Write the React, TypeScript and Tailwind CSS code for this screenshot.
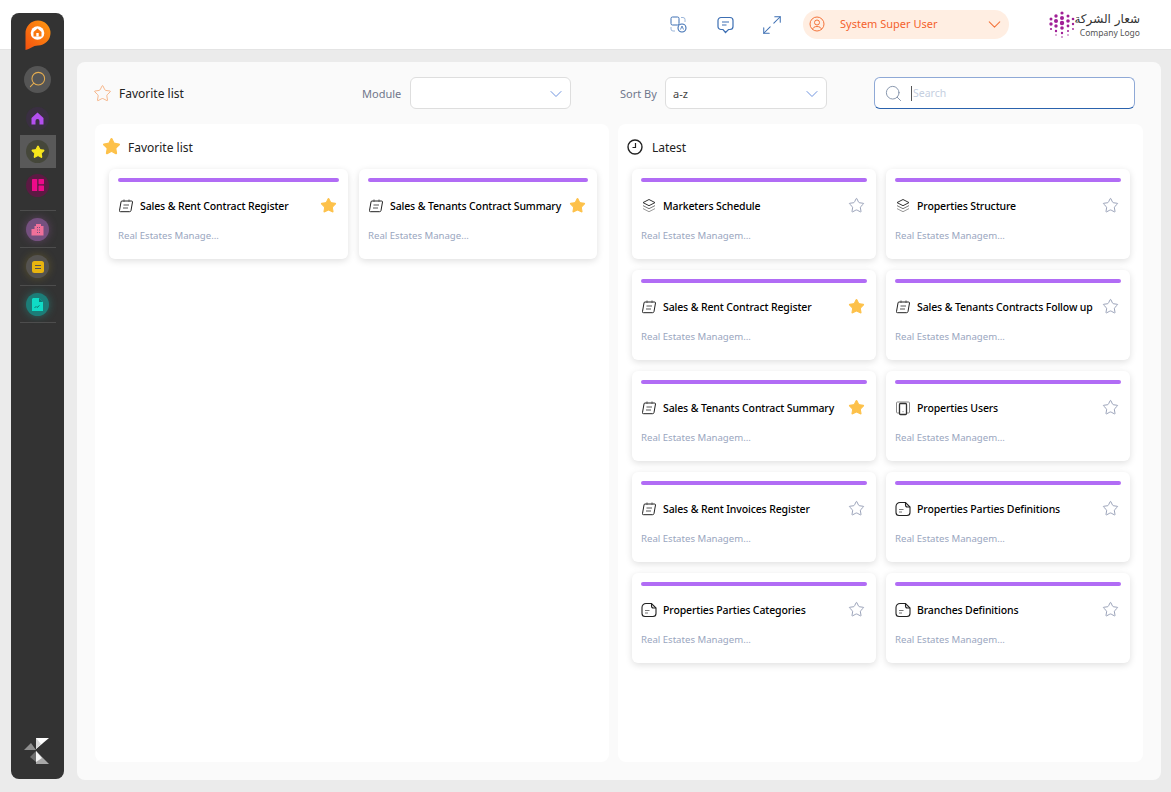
import { ChevronDown, Maximize2, Search, Star } from 'lucide-react';

const font = { fontFamily: '"Noto Sans", "Noto Sans CJK SC", sans-serif' };

type IconKind = 'note' | 'layers' | 'phone' | 'doc';

function CardIcon({ kind }: { kind: IconKind }) {
  if (kind === 'layers') {
    return (
      <svg width="16" height="16" viewBox="0 0 16 16" fill="none" stroke="#333" strokeWidth="1">
        <path d="M8 1.500 14 4.600 8 7.700 2 4.600Z" />
        <path d="M2 7.600 8 10.700 14 7.600" stroke="#777" />
        <path d="M2 10.600 8 13.700 14 10.600" stroke="#999" />
      </svg>
    );
  }
  if (kind === 'phone') {
    return (
      <svg width="16" height="16" viewBox="0 0 16 16" fill="none" stroke="#333" strokeWidth="1">
        <path d="M4 13H2.500a1 1 0 0 1-1-1V3a1 1 0 0 1 1-1h11a1 1 0 0 1 1 1v9a1 1 0 0 1-1 1H12" stroke="#888" />
        <rect x="4.500" y="3.500" width="7" height="11" rx="1" strokeWidth="1.300" />
        <path d="M8 11.500v.6" />
      </svg>
    );
  }
  if (kind === 'doc') {
    return (
      <svg width="16" height="16" viewBox="0 0 16 16" fill="none" stroke="#222" strokeWidth="1.100">
        <path d="M5 1.500h5.500L15 6v5.500a3 3 0 0 1-3 3H4a3 3 0 0 1-3-3V5.500a4 4 0 0 1 4-4Z" />
        <path d="M10.500 1.500v2.500A2 2 0 0 0 12.500 6H15" />
        <path d="M4 8.500h4.500M4 11h3" stroke="#777" />
      </svg>
    );
  }
  return (
    <svg width="16" height="16" viewBox="0 0 16 16" fill="none" stroke="#222" strokeWidth="1">
      <path d="M4 3h9.500a1 1 0 0 1 1 1l-1.500 8.500a1.500 1.500 0 0 1-1.500 1.200H2.500a1 1 0 0 1-1-1.200L3 4a1 1 0 0 1 1-1Z" />
      <path d="M6 1.500V4M11 1.500V4M5.500 7h5.500M5 10h5" stroke="#555" />
    </svg>
  );
}

function FavStar({ on }: { on: boolean }) {
  return on ? (
    <Star size={17} fill="#fdc14a" stroke="#fdc14a" strokeWidth={1.500} className="mr-[2.500px] -mt-[2px]" />
  ) : (
    <Star size={17} fill="none" stroke="#8a94ad" strokeWidth={1.200} className="mr-[2.500px] -mt-[2px]" />
  );
}

function ItemCard({ title, icon, on, sub }: { title: string; icon: IconKind; on: boolean; sub: string }) {
  return (
    <div className="h-[90px] rounded-md bg-white px-[9px] pt-[9px] shadow-[0_2px_7px_rgba(0,0,0,0.13)]">
      <div className="h-[4px] rounded-full bg-[#b16cf5]" />
      <div className="mt-[15px] flex h-[18px] items-center">
        <CardIcon kind={icon} />
        <span className="ml-[6px] mt-[2px] flex-1 whitespace-nowrap text-[10.500px] font-medium tracking-[-0.130px] text-black">{title}</span>
        <FavStar on={on} />
      </div>
      <div className="mt-[14px] text-[9.600px] leading-[14px] text-[#9aa6c0]">{sub}</div>
    </div>
  );
}

const latest: { title: string; icon: IconKind; on: boolean }[] = [
  { title: 'Marketers Schedule', icon: 'layers', on: false },
  { title: 'Properties Structure', icon: 'layers', on: false },
  { title: 'Sales & Rent Contract Register', icon: 'note', on: true },
  { title: 'Sales & Tenants Contracts Follow up', icon: 'note', on: false },
  { title: 'Sales & Tenants Contract Summary', icon: 'note', on: true },
  { title: 'Properties Users', icon: 'phone', on: false },
  { title: 'Sales & Rent Invoices Register', icon: 'note', on: false },
  { title: 'Properties Parties Definitions', icon: 'doc', on: false },
  { title: 'Properties Parties Categories', icon: 'doc', on: false },
  { title: 'Branches Definitions', icon: 'doc', on: false },
];

function SideIcon({ bg, children, glow }: { bg: string; children: React.ReactNode; glow?: string }) {
  return (
    <div className={`flex h-[23px] w-[23px] items-center justify-center rounded-full ${bg} ${glow ?? ''}`}>{children}</div>
  );
}

function Sidebar() {
  return (
    <aside className="absolute left-[11px] top-[13px] flex h-[766px] w-[53px] flex-col items-center rounded-lg bg-[#333333]">
      <svg className="mt-[7px]" width="26" height="30" viewBox="0 0 26 30">
        <defs>
          <linearGradient id="logoFill" x1="0" y1="1" x2="1" y2="0">
            <stop offset="0" stopColor="#f4500f" />
            <stop offset="1" stopColor="#ff9a10" />
          </linearGradient>
        </defs>
        <path d="M0.500 30V13a12.500 12.500 0 1 1 12.500 12.500C8 25.500 5 29 0.500 30Z" fill="url(#logoFill)" />
        <circle cx="12.500" cy="13" r="6.800" fill="#fff" />
        <path d="M12.500 8.500 16.500 12V16.500H8.500V12Z" fill="#f9780f" />
        <rect x="11.300" y="13" width="2.400" height="3.500" fill="#fff" />
      </svg>
      <div className="mt-[16px] flex h-[27px] w-[27px] items-center justify-center rounded-full bg-[#555555]">
        <Search size={19} className="-scale-x-100 text-[#e5ad50]" strokeWidth={1.300} />
      </div>
      <div className="mt-[10px] flex h-[30px] w-[36px] items-center justify-center">
        <SideIcon bg="bg-[#3a2f42]">
          <svg width="13" height="13" viewBox="0 0 13 13">
            <path d="M6.500 0.500 12.500 6v6.500H8.500V9a2 2 0 0 0-4 0v3.500H.5V6Z" fill="#b44ff0" />
          </svg>
        </SideIcon>
      </div>
      <div className="mt-[2px] flex h-[33px] w-[36px] items-center justify-center bg-[#595959]">
        <SideIcon bg="bg-[#45473a]">
          <Star size={14} fill="#f8e71c" stroke="#f8e71c" strokeWidth={2} />
        </SideIcon>
      </div>
      <div className="mt-[5px] flex h-[24px] items-center justify-center">
        <SideIcon bg="bg-[#5c1a43]">
          <svg width="12" height="12" viewBox="0 0 12 12" fill="#ee0a8a">
            <rect x="0" y="0" width="5.200" height="12" rx="0.600" />
            <rect x="6.500" y="0" width="5.500" height="5.200" rx="0.600" />
            <rect x="6.500" y="6.500" width="5.500" height="5.500" rx="0.600" />
          </svg>
        </SideIcon>
      </div>
      <div className="mt-[13px] h-px w-[36px] bg-[#4d4d4d]" />
      <div className="flex h-[36px] items-center">
        <SideIcon bg="bg-[#75507f]" glow="shadow-[0_0_8px_rgba(160,90,170,0.4)]">
          <svg width="13" height="13" viewBox="0 0 13 13" fill="#f0709a">
            <path d="M0.500 12.500V6H3.500V3H5V1H10V3H12.500V12.500Z" />
            <path d="M6 4h1v1H6zM8 4h1v1H8zM6 6.500h1v1H6zM8 6.500h1v1H8zM6 9h1v1H6zM8 9h1v1H8z" fill="#75507f" />
          </svg>
        </SideIcon>
      </div>
      <div className="h-px w-[36px] bg-[#4d4d4d]" />
      <div className="flex h-[37px] items-center">
        <SideIcon bg="bg-[#555350]" glow="shadow-[0_0_8px_rgba(190,160,30,0.3)]">
          <svg width="12" height="12" viewBox="0 0 12 12">
            <rect width="12" height="12" rx="2.500" fill="#e8b40e" />
            <path d="M3 4.500h6M3 7.500h6" stroke="#555350" strokeWidth="1" />
          </svg>
        </SideIcon>
      </div>
      <div className="h-px w-[36px] bg-[#4d4d4d]" />
      <div className="flex h-[36px] items-center">
        <SideIcon bg="bg-[#1c7d78]" glow="shadow-[0_0_8px_rgba(30,170,160,0.45)]">
          <svg width="11" height="13" viewBox="0 0 11 13">
            <path d="M1 0H7L11 4V13H0V1Z" fill="#0fdcc6" />
            <path d="M7 0V4H11Z" fill="#0a7d75" />
            <path d="M2.500 10l1.500-1.500 1 1 2.500-2" stroke="#0a5d58" fill="none" strokeWidth="0.800" />
          </svg>
        </SideIcon>
      </div>
      <div className="h-px w-[36px] bg-[#4d4d4d]" />
      <svg className="-ml-px mb-[15px] mt-auto" width="26" height="26" viewBox="0 0 26 26">
        <path d="M12 0H25L12 11Z" fill="#fff" />
        <path d="M12 0 17 6 12 11Z" fill="#d8d8d8" />
        <path d="M0 12 7 5 12 12Z" fill="#8f8f8f" />
        <path d="M6 19 12 13 12 24Z" fill="#6e6e6e" />
        <path d="M12 13 25 26H12Z" fill="#a8a8a8" />
        <path d="M12 13 18 20 12 24Z" fill="#f5f5f5" />
      </svg>
    </aside>
  );
}

function Header() {
  return (
    <header className="flex h-[50px] items-center border-b border-[#e4e4e4] bg-white pl-[670px]">
      <svg width="17" height="17" viewBox="0 0 17 17" fill="none" stroke="#3d6fb3" strokeWidth="1">
        <rect x="1" y="1" width="8" height="8" rx="1.500" />
        <path d="M11 1.500h2a2 2 0 0 1 2 2V6M1 11v2a2 2 0 0 0 2 2h2" stroke="#9db7da" />
        <circle cx="12" cy="12" r="4" strokeWidth="1.100" />
        <path d="M10.500 13.500 12 10l1.500 3.500" strokeWidth="0.800" />
      </svg>
      <svg className="ml-[30px]" width="17" height="18" viewBox="0 0 17 18" fill="none" stroke="#3d6fb3" strokeWidth="1.200">
        <path d="M4 1.500h9a3 3 0 0 1 3 3v6a3 3 0 0 1-3 3h-1.500L8.500 16.500 6 13.500H4a3 3 0 0 1-3-3v-6a3 3 0 0 1 3-3Z" />
        <path d="M5 6h7M5 9h4.500" />
      </svg>
      <Maximize2 size={22} className="ml-[27px] text-[#3d6fb3]" strokeWidth={1.100} />
      <div className="ml-[20px] flex h-[29px] w-[206px] items-center rounded-full bg-[#ffeee2] pl-[6px] pr-[4px]">
        <svg width="16" height="17" viewBox="0 0 16 17" fill="none" stroke="#f4743b" strokeWidth="1">
          <circle cx="8" cy="8" r="7" />
          <circle cx="8" cy="6.500" r="2.500" />
          <path d="M3.500 13.500c.5-2 2-3 4.500-3s4 1 4.500 3" />
        </svg>
        <span className="ml-[15px] flex-1 text-[11px] text-[#f4622d]">System Super User</span>
        <ChevronDown size={21} className="text-[#f4743b]" strokeWidth={1.200} />
      </div>
      <svg className="ml-[40px]" width="26" height="28" viewBox="0 0 26 28" fill="#a01f96">
        {[
          [13, 2, 1.600], [7, 5, 1.700], [13, 7, 2], [19, 5, 1.500], [2, 8, 1.500], [24, 8, 1.300],
          [7, 10, 2], [13, 12, 2.200], [19, 10, 1.800], [2, 13, 1.700], [24, 13, 1.200], [7, 15, 1.700],
          [13, 17, 1.800], [19, 15, 1.400], [2, 18, 1.100], [24, 18, 0.900], [7, 20, 1.200], [13, 22, 1.200],
          [19, 20, 1], [13, 26, 0.800], [7, 24, 0.700], [19, 24, 0.700],
        ].map(([cx, cy, r]) => (
          <circle key={`${cx}-${cy}`} cx={cx} cy={cy} r={r} />
        ))}
      </svg>
      <div className="ml-[5px] flex w-[60px] flex-col items-end leading-none">
        <span className="whitespace-nowrap text-[12px] leading-[15px] text-[#333]" dir="rtl" style={{ fontFamily: '"DejaVu Sans", sans-serif' }}>شعار الشركة</span>
        <span className="whitespace-nowrap text-[8.500px] leading-[11px] text-[#555]">Company Logo</span>
      </div>
    </header>
  );
}

function Toolbar() {
  return (
    <div className="flex h-[62px] items-center pl-[16px]">
      <Star size={19} className="text-[#f5a56f]" strokeWidth={1} />
      <span className="ml-[7px] mt-[2px] w-[243px] text-xs text-[#222]">Favorite list</span>
      <span className="mt-[2px] w-[39px] whitespace-nowrap text-[11px] text-[#70778c]">Module</span>
      <div className="ml-[9px] flex h-[32px] w-[161px] items-center justify-end rounded-md border border-[#dedede] bg-white pr-[4px]">
        <ChevronDown size={20} className="mt-[2px] text-[#6f94e0]" strokeWidth={1.200} />
      </div>
      <span className="ml-[49px] mt-[2px] w-[37px] whitespace-nowrap text-[11px] text-[#70778c]">Sort By</span>
      <div className="ml-[8px] flex h-[32px] w-[162px] items-center justify-between rounded-md border border-[#dedede] bg-white pl-[7px] pr-[4px]">
        <span className="mt-[2px] text-[11px] text-[#444]">a-z</span>
        <ChevronDown size={20} className="mt-[2px] text-[#6f94e0]" strokeWidth={1.200} />
      </div>
      <div className="ml-[47px] flex h-[32px] w-[261px] items-center rounded-md border border-[#8fa9d6] border-b-[#2a62ad] bg-white pl-[9px]">
        <Search size={19} className="text-[#8593ab]" strokeWidth={1.200} />
        <span className="ml-[8px] h-[15px] w-px bg-[#555]" />
        <span className="ml-px mt-[2px] text-[10.500px] text-[#c5cfdf]">Search</span>
      </div>
    </div>
  );
}

export default function App() {
  return (
    <div className="relative h-[792px] w-[1171px] overflow-hidden bg-[#ebebeb]" style={font}>
      <Header />
      <Sidebar />
      <main className="ml-[77px] mt-[12px] h-[718px] w-[1084px] rounded-lg bg-[#fafafa]">
        <Toolbar />
        <div className="flex gap-[9px] px-[18px]">
          <section className="h-[638px] w-[514px] rounded-lg bg-white">
            <div className="flex h-[45px] items-center pl-[7px]">
              <Star size={19} fill="#fdc14a" stroke="#fdc14a" strokeWidth={1.500} />
              <span className="ml-[7px] mt-[2px] text-xs text-[#222]">Favorite list</span>
            </div>
            <div className="grid grid-cols-[239px_238px] gap-[11px] pl-[14px]">
              <ItemCard title="Sales & Rent Contract Register" icon="note" on sub="Real Estates Manage..." />
              <ItemCard title="Sales & Tenants Contract Summary" icon="note" on sub="Real Estates Manage..." />
            </div>
          </section>
          <section className="h-[638px] w-[525px] rounded-lg bg-white">
            <div className="flex h-[45px] items-center pl-[9px]">
              <svg width="16" height="16" viewBox="0 0 16 16" fill="none" stroke="#222" strokeWidth="1.400">
                <circle cx="8" cy="8" r="7" />
                <path d="M8.500 4v4.500H5.500" strokeWidth="1.200" />
              </svg>
              <span className="ml-[9px] mt-[2px] text-xs text-[#222]">Latest</span>
            </div>
            <div className="grid grid-cols-[244px_244px] gap-x-[10px] gap-y-[11px] pl-[14px]">
              {latest.map(item => (
                <ItemCard key={item.title} {...item} sub="Real Estates Managem..." />
              ))}
            </div>
          </section>
        </div>
      </main>
    </div>
  );
}
